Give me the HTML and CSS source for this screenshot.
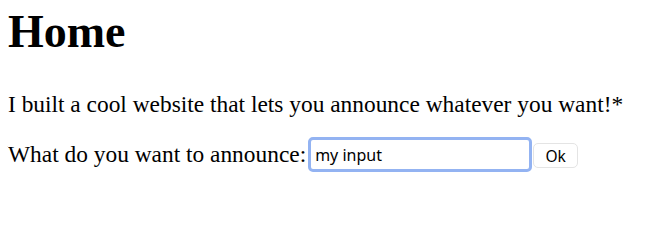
FILE: index.html
```html
<!DOCTYPE html>
<html>
<head>
<meta charset="utf-8">
<link rel="stylesheet" href="styles.css">
</head>
<body>
<h1 class="title">Home</h1>
<p class="text">I built a cool website that lets you announce whatever you want!*</p>
<form class="form">
<label class="label" for="ann">What do you want to announce:</label><input class="field" id="ann" type="text" value="my input"><button class="btn" type="button">Ok</button>
</form>
</body>
</html>
```
FILE: styles.css
```css
body {
  margin: 8px;
  font-family: "Liberation Serif", "Times New Roman", serif;
  font-size: 23.4px;
  color: #000;
  background: #fff;
}
.title {
  font-size: 46px;
  font-weight: bold;
  margin: 1px 0 0;
  line-height: 1;
}
.text {
  margin: 36px 0 0;
}
.form {
  display: flex;
  align-items: center;
  margin-top: 19px;
}
.label {
  margin-right: 2px;
}
.field {
  font-family: "Noto Sans", "Liberation Sans", sans-serif;
  font-size: 16px;
  width: 224px;
  height: 35px;
  box-sizing: border-box;
  padding: 0 3px 0 4px;
  border: 3px solid #93b3f2;
  border-radius: 5px;
  outline: none;
  color: #000;
  background: #fff;
  margin: 0;
}
.btn {
  font-family: "Noto Sans", "Liberation Sans", sans-serif;
  font-size: 15.5px;
  width: 45px;
  height: 25px;
  padding: 0;
  margin: 2px 0 0 1px;
  background: #fff;
  border: 1px solid #e4e4e4;
  border-radius: 5px;
  color: #000;
}
```
